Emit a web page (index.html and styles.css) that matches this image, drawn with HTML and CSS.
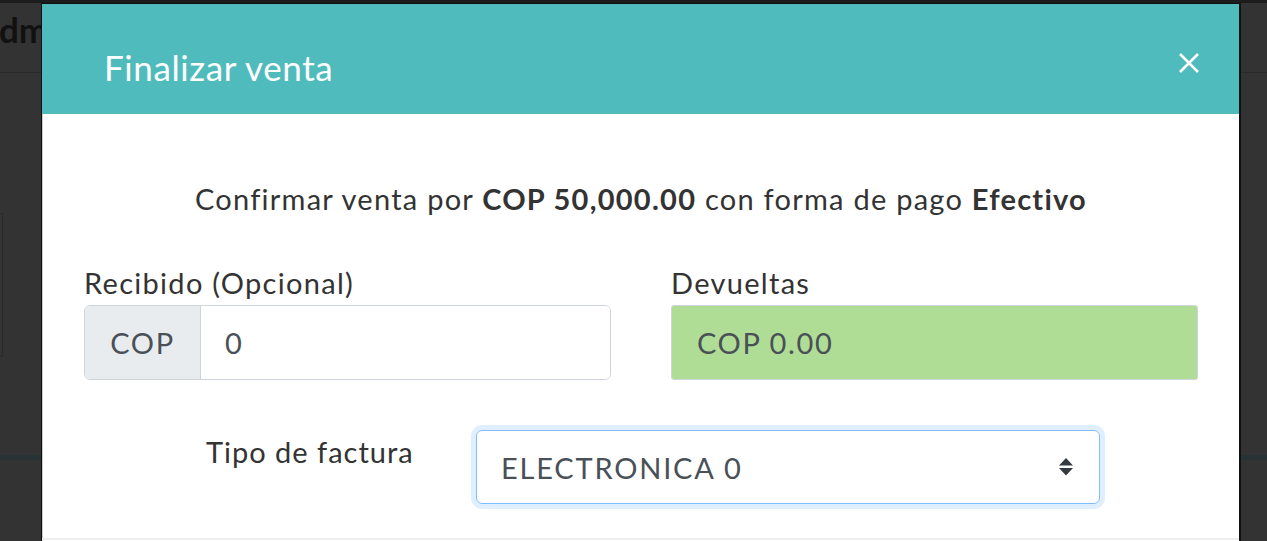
FILE: index.html
```html
<!DOCTYPE html>
<html lang="es">
<head>
  <meta charset="UTF-8">
  <meta name="viewport" content="width=device-width, initial-scale=1.0">
  <title>Finalizar venta</title>
  <link rel="stylesheet" href="styles.css">
</head>
<body>
  <!-- Page behind the modal -->
  <div class="page">
    <div class="page-top">
      <span class="brand">Admin</span>
    </div>
    <div class="page-box"></div>
    <div class="page-line"></div>
  </div>

  <!-- Modal -->
  <div class="modal">
    <div class="modal-header">
      <h5 class="modal-title">Finalizar venta</h5>
      <button class="close" aria-label="Cerrar">
        <svg width="22" height="22" viewBox="0 0 22 22">
          <path d="M2 2 L20 20 M20 2 L2 20" stroke="#fff" stroke-width="2.5" fill="none"/>
        </svg>
      </button>
    </div>
    <div class="modal-body">
      <p class="confirm">Confirmar venta por <strong>COP 50,000.00</strong> con forma de pago <strong>Efectivo</strong></p>

      <div class="pay-row">
        <div class="field">
          <label for="recibido">Recibido (Opcional)</label>
          <div class="input-group">
            <span class="addon">COP</span>
            <input type="text" id="recibido" value="0">
          </div>
        </div>
        <div class="field">
          <label>Devueltas</label>
          <div class="change-box">COP 0.00</div>
        </div>
      </div>

      <div class="invoice-row">
        <label for="tipo">Tipo de factura</label>
        <div class="select">
          <span>ELECTRONICA 0</span>
          <svg width="18" height="22" viewBox="0 0 18 22">
            <path d="M9 2 L16 9.5 L2 9.5 Z M2 12 L16 12 L9 19.5 Z" fill="#343a40"/>
          </svg>
        </div>
      </div>
    </div>
  </div>
</body>
</html>
```

FILE: styles.css
```css
/* Base */
body {
  margin: 0;
  height: 541px;
  overflow: hidden;
  background-color: #333;
  font-family: Lato, "Open Sans", sans-serif;
  color: #333;
  position: relative;
}

/* Page behind the overlay */
.page {
  border-top: 3px solid #1c1c1c;
}

.page-top {
  height: 69px;
  border-bottom: 1px solid #2a2a2a;
  overflow: hidden;
}

.brand {
  display: block;
  margin-left: -25px;
  margin-top: 5px;
  font-size: 35px;
  font-weight: bold;
  color: #111;
}

.page-box {
  margin-top: 140px;
  width: 2px;
  height: 142px;
  border: 1px solid #2a2a2a;
  border-left: none;
}

.page-line {
  margin-top: 98px;
  height: 5px;
  background-color: #263233;
}

/* Modal window */
.modal {
  position: absolute;
  top: 3px;
  left: 41px;
  width: 1197px;
  height: 560px;
  background-color: #fff;
  border: 1px solid #111;
  border-right: 2px solid #111;
  box-shadow: 1px 0 0 #ccc inset;
}

.modal-header {
  height: 110px;
  background-color: #4fbbbd;
  display: flex;
  align-items: center;
  justify-content: space-between;
  padding: 0 39px 0 62px;
  box-sizing: border-box;
}

.modal-title {
  margin: 0;
  margin-top: 16px;
  font-size: 35px;
  letter-spacing: 0.6px;
  font-weight: normal;
  color: #fff;
}

.close {
  background: none;
  border: none;
  padding: 0;
  margin-top: 8px;
  cursor: pointer;
  display: flex;
}

.modal-body {
  padding: 64px 41px 0 42px;
  border-bottom: 2px solid #eee;
  height: 426px;
  box-sizing: border-box;
}

.confirm {
  margin: 0;
  text-align: center;
  font-size: 29px;
  letter-spacing: 1.25px;
  line-height: 42px;
}

.confirm strong {
  font-weight: bold;
}

/* Received / change row */
.pay-row {
  display: grid;
  grid-template-columns: 527px 527px;
  gap: 60px;
  margin-top: 42px;
}

label {
  display: block;
  font-size: 29px;
  letter-spacing: 1.3px;
  line-height: 42px;
  color: #333;
}

.field label {
  margin-bottom: 1px;
}

.input-group {
  display: flex;
  height: 75px;
  border: 1px solid #ced4da;
  border-radius: 6px;
  box-sizing: border-box;
  overflow: hidden;
}

.addon {
  width: 116px;
  background-color: #e9ecef;
  border-right: 1px solid #ced4da;
  display: flex;
  align-items: center;
  justify-content: center;
  font-size: 29px;
  letter-spacing: 1.6px;
  color: #495057;
}

.input-group input {
  flex: 1;
  border: none;
  padding: 0 24px;
  font-family: inherit;
  font-size: 29px;
  color: #495057;
  outline: none;
}

.change-box {
  height: 75px;
  box-sizing: border-box;
  background-color: #b0dd95;
  border: 1px solid #ced4da;
  border-radius: 3px;
  padding-left: 25px;
  display: flex;
  align-items: center;
  font-size: 29px;
  letter-spacing: 1.6px;
  color: #495057;
}

/* Invoice type row */
.invoice-row {
  display: grid;
  grid-template-columns: 270px 624px;
  margin-left: 122px;
  margin-top: 50px;
}

.invoice-row label {
  padding-top: 1px;
  letter-spacing: 1px;
}

.select {
  height: 74px;
  box-sizing: border-box;
  border: 1px solid #80bdff;
  border-radius: 6px;
  box-shadow: 0 0 0 5px rgba(0, 123, 255, 0.12);
  display: flex;
  align-items: center;
  justify-content: space-between;
  padding: 0 24px 0 24px;
  font-size: 29px;
  letter-spacing: 1.8px;
  color: #495057;
}
```
